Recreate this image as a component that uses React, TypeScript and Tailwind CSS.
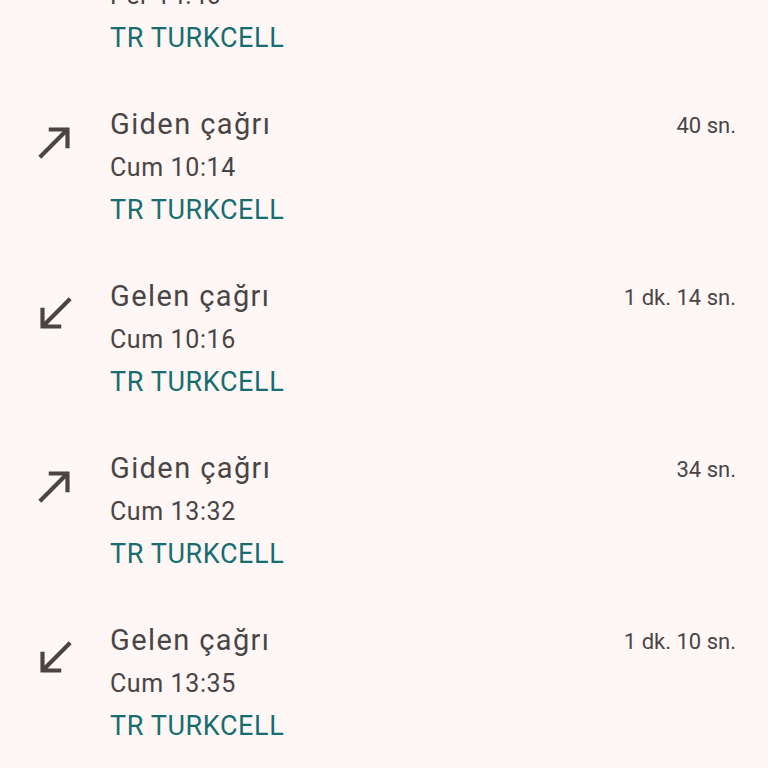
import React from "react";

type Call = { dir: "out" | "in"; title: string; time: string; dur: string };

const calls: Call[] = [
  { dir: "in", title: "Gelen çağrı", time: "Per 14:46", dur: "" },
  { dir: "out", title: "Giden çağrı", time: "Cum 10:14", dur: "40 sn." },
  { dir: "in", title: "Gelen çağrı", time: "Cum 10:16", dur: "1 dk. 14 sn." },
  { dir: "out", title: "Giden çağrı", time: "Cum 13:32", dur: "34 sn." },
  { dir: "in", title: "Gelen çağrı", time: "Cum 13:35", dur: "1 dk. 10 sn." },
];

function OutIcon() {
  return (
    <svg width="50" height="50" viewBox="0 0 24 24" fill="#4a4545">
      <path d="M9 5v2h6.59L4 18.59 5.41 20 17 8.41V15h2V5z" />
    </svg>
  );
}

function InIcon() {
  return (
    <svg width="50" height="50" viewBox="0 0 24 24" fill="#4a4545">
      <path d="M20 5.41L18.59 4 7 15.59V9H5v10h10v-2H8.41z" />
    </svg>
  );
}

export default function App() {
  return (
    <div
      className="w-[768px] h-[768px] overflow-hidden bg-[#fef7f5]"
      style={{ fontFamily: "Roboto, 'Noto Sans', sans-serif" }}
    >
      <div className="flex flex-col -mt-[92px]">
        {calls.map((c, i) => (
          <div key={i} className="flex items-start py-[22px] pl-[30px] pr-[32px]">
            <div className="w-[50px] h-[50px] mt-[15px] shrink-0">
              {c.dir === "out" ? <OutIcon /> : <InIcon />}
            </div>
            <div className="flex flex-col ml-[30px] flex-1">
              <div className="text-[29px] leading-[44px] tracking-[1.4px] text-[#4a4545]">{c.title}</div>
              <div className="text-[25px] leading-[44px] tracking-[0.6px] text-[#4a4545]">{c.time}</div>
              <div className="text-[27px] leading-[40px] tracking-[0.6px] text-[#166e70]">TR TURKCELL</div>
            </div>
            <div className="text-[22px] leading-[44px] text-[#4a4545] pt-[2px]">{c.dur}</div>
          </div>
        ))}
      </div>
    </div>
  );
}
